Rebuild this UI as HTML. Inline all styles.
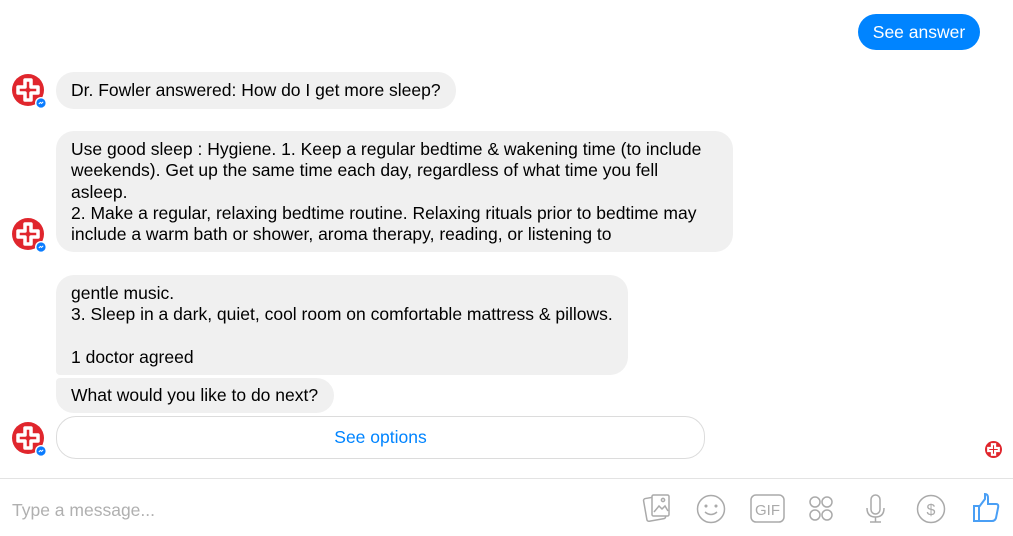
<!DOCTYPE html><html><head><style>
body{margin:0;width:1013px;height:536px;background:#fff;font-family:"Liberation Sans",sans-serif;position:relative;overflow:hidden}
.b{position:absolute;background:#f0f0f0;border-radius:18px;color:#000;font-size:17.5px;line-height:21.3px;padding:0 15px;box-sizing:border-box;white-space:nowrap}
.av{position:absolute;left:12px;width:40px;height:40px;overflow:visible}
</style></head><body>
<div style="position:absolute;left:858px;top:14px;width:122px;height:36px;border-radius:18px;background:#0084ff;color:#fff;font-size:17.5px;line-height:36px;text-align:center">See answer</div>

<svg width="0" height="0" style="position:absolute"><defs><g id="a"><circle cx="16" cy="16" r="16" fill="#e0262d"/><path d="M13 6h6v7h7v6h-7v7h-6v-7H6v-6h7z" fill="none" stroke="#fff" stroke-width="3.5" stroke-linejoin="round"/><circle cx="29" cy="29" r="6" fill="#fff"/><circle cx="29" cy="29" r="4.6" fill="#0a7cff"/><path d="M26.8 30l1.6-1.6 1.2 1 1.6-1.6" stroke="#fff" stroke-width="1" fill="none"/></g></defs></svg>
<svg class="av" style="top:74px"><use href="#a"/></svg>
<svg class="av" style="top:218px"><use href="#a"/></svg>
<svg class="av" style="top:422px"><use href="#a"/></svg>

<div class="b" style="left:56px;top:72px;width:400px;height:37px;line-height:37px">Dr. Fowler answered: How do I get more sleep?</div>
<div class="b" style="left:56px;top:131px;width:677px;height:121px;padding-top:8px">Use good sleep : Hygiene. 1. Keep a regular bedtime &amp; wakening time (to include<br>weekends). Get up the same time each day, regardless of what time you fell<br>asleep.<br>2. Make a regular, relaxing bedtime routine. Relaxing rituals prior to bedtime may<br>include a warm bath or shower, aroma therapy, reading, or listening to</div>
<div class="b" style="left:56px;top:275px;width:572px;height:100px;padding-top:8px;border-radius:18px 18px 18px 4px">gentle music.<br>3. Sleep in a dark, quiet, cool room on comfortable mattress &amp; pillows.<br><br>1 doctor agreed</div>
<div class="b" style="left:56px;top:378px;width:278px;height:35px;line-height:35px;border-radius:4px 18px 18px 18px">What would you like to do next?</div>
<div style="position:absolute;left:56px;top:416px;width:649px;height:43px;box-sizing:border-box;border:1px solid #dcdcdc;border-radius:20px;color:#0084ff;font-size:17.5px;line-height:41px;text-align:center">See options</div>
<svg style="position:absolute;left:985px;top:441px" width="17" height="17" viewBox="0 0 32 32"><circle cx="16" cy="16" r="16" fill="#e0262d"/><path d="M13 6h6v7h7v6h-7v7h-6v-7H6v-6h7z" fill="none" stroke="#fff" stroke-width="4"/></svg>

<div style="position:absolute;left:0;top:478px;width:1013px;border-top:1px solid #e3e3e3"></div>
<div style="position:absolute;left:12px;top:500px;font-size:17.5px;color:#b0b0b0">Type a message...</div>
<svg style="position:absolute;left:630px;top:480px" width="383" height="56" fill="none" stroke="#aaa" stroke-width="1.5">
<rect x="15" y="17" width="19" height="23" rx="2" transform="rotate(-10 25 28)"/><rect x="22" y="15" width="17" height="21" rx="1.5" fill="#fff"/><path d="M24 32l5-6 3 3 3-3 3 5"/><circle cx="33" cy="20" r="1.6"/>
<circle cx="81" cy="29" r="13.5"/><circle cx="76" cy="26" r=".8" fill="#aaa"/><circle cx="86" cy="26" r=".8" fill="#aaa"/><path d="M75 32q6 5 12 0"/>
<rect x="121" y="15" width="33" height="27" rx="5"/><text x="137.5" y="35" font-family="Liberation Sans" font-size="15" text-anchor="middle" fill="#aaa" stroke="none">GIF</text>
<circle cx="185" cy="22" r="5"/><circle cx="197" cy="22" r="5"/><circle cx="185" cy="35" r="5"/><circle cx="197" cy="35" r="5"/>
<rect x="241" y="15" width="9" height="19" rx="4.5"/><path d="M237 28q0 9 8.5 9t8.5-9M245.5 37v5M240 42h11"/>
<circle cx="301" cy="29" r="13.5"/><text x="301" y="35" font-family="Liberation Sans" font-size="16" text-anchor="middle" fill="#aaa" stroke="none">$</text>
<path stroke="#4a9ff5" stroke-width="2" d="M344 26h5v15h-5zM349 27l6-8v-5q3 0 3 4v6h8q3 0 2 4l-2 10q-1 3-4 3h-13"/>
</svg>
</body></html>
